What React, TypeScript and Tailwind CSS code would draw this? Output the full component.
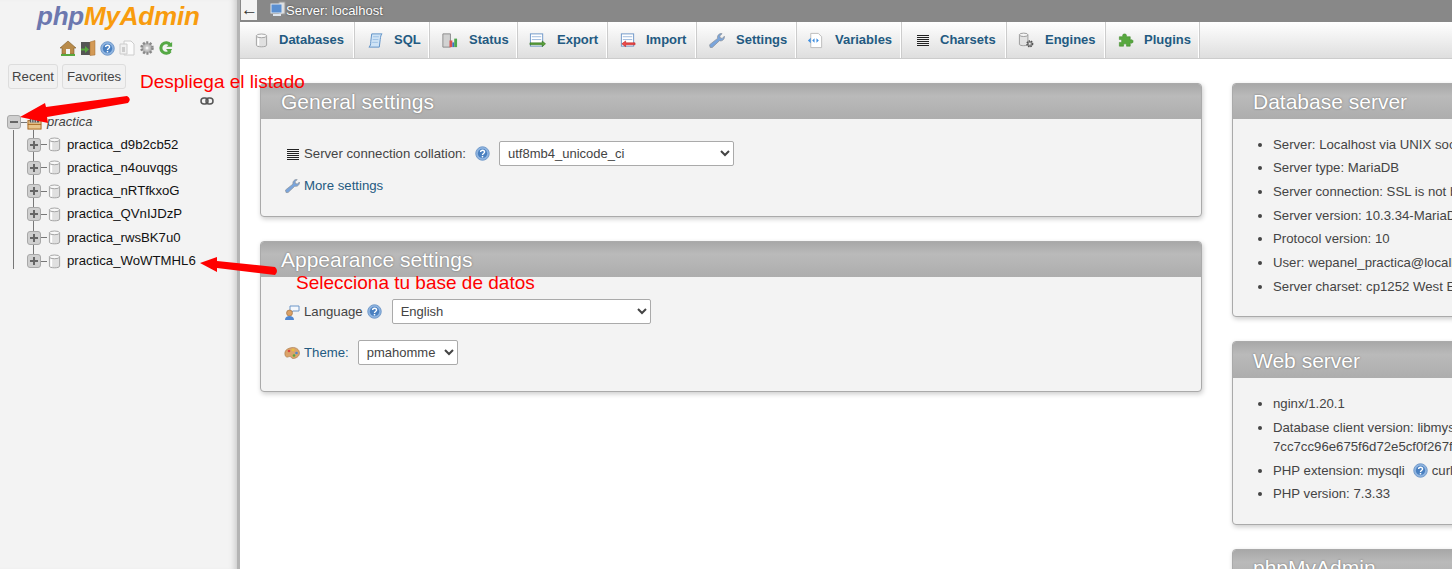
import { FC, ReactNode } from "react";

const Help: FC<{ className?: string }> = ({ className }) => (
  <svg viewBox="0 0 16 16" className={"w-[15px] h-[15px] shrink-0 " + (className ?? "")}>
    <circle cx="8" cy="8" r="7.2" fill="#8fb4e0" stroke="#6f97c8" />
    <circle cx="8" cy="8" r="5" fill="#4a80c0" />
    <path d="M6 6.400c0-2.600 4.200-2.600 4.200 0 0 1.600-2.200 1.600-2.200 3.200" fill="none" stroke="#fff" strokeWidth="1.500" />
    <rect x="7.200" y="10.600" width="1.600" height="1.600" fill="#fff" />
  </svg>
);

const Db: FC<{ className?: string }> = ({ className }) => (
  <svg viewBox="0 0 14 16" className={"w-[13px] h-[15px] shrink-0 " + (className ?? "")}>
    <path d="M1.500 3v10c0 2.400 11 2.400 11 0V3z" fill="#e0e0e0" stroke="#a0a0a0" />
    <ellipse cx="7" cy="3" rx="5.500" ry="2" fill="#f8f8f8" stroke="#a0a0a0" />
    <path d="M3.500 5.500v8" stroke="#fff" strokeWidth="2" />
  </svg>
);

const Lines: FC = () => (
  <svg viewBox="0 0 14 14" className="w-[14px] h-[14px] shrink-0">
    <path d="M1 2.500h12M1 4.500h12M1 6.500h12M1 8.500h12M1 10.500h12M1 12.500h12" stroke="#222" strokeWidth="1" />
  </svg>
);

const Wrench: FC<{ className?: string }> = ({ className }) => (
  <svg viewBox="0 0 16 16" className={"w-4 h-4 shrink-0 " + (className ?? "")}>
    <path d="M2 14.500 1.500 12 9 6c-.6-2.600 1.600-5 4.200-4.400L11 3.800l.6 1.800 1.800.4 2-2c.4 2.800-2 5-4.600 4.200L4 14.600z" fill="#7aa5dc" stroke="#8a9099" strokeWidth=".7" />
  </svg>
);

const Sql = () => (
  <svg viewBox="0 0 18 18" className="w-[17px] h-[17px]">
    <path d="M5 2h11c-1.500 1-1.500 3-2 6l-1 8H2c1.500-1 2-3 2-6z" fill="#cfe3f5" stroke="#5b8fc7" />
    <path d="M6.500 5h6M6 8h6M5.500 11h6" stroke="#9cc0e4" />
  </svg>
);

const Status = () => (
  <svg viewBox="0 0 18 18" className="w-[17px] h-[17px]">
    <path d="M2 2h8v14H2z" fill="#d2d2d2" stroke="#8a8a8a" />
    <path d="M9 9h3v7H9z" fill="#d9534f" />
    <path d="M12 11h2v5h-2z" fill="#3f6fc4" />
    <path d="M14 7h3v9h-3z" fill="#4fa64f" />
  </svg>
);

const Export = () => (
  <svg viewBox="0 0 18 18" className="w-[17px] h-[17px]">
    <rect x="1.500" y="2" width="13" height="13" fill="#fff" stroke="#6d96c8" />
    <path d="M3 5h10M3 8h10" stroke="#9bb9dc" />
    <path d="M1 11.500h13v-2l3.500 3-3.500 3v-2H1z" fill="#5aa33a" stroke="#2f6b1c" strokeWidth=".6" />
  </svg>
);

const Import = () => (
  <svg viewBox="0 0 18 18" className="w-[17px] h-[17px]">
    <rect x="2.500" y="2" width="13" height="13" fill="#fff" stroke="#6d96c8" />
    <path d="M4 5h10M4 8h10" stroke="#9bb9dc" />
    <path d="M17 11.500H7v-2l-4 3 4 3v-2h10z" fill="#ef4a4a" stroke="#b92020" strokeWidth=".6" />
  </svg>
);

const Variables = () => (
  <svg viewBox="0 0 18 18" className="w-[17px] h-[17px]">
    <path d="M4 1.500h8l3.500 3.500v11.500H4z" fill="#fff" stroke="#bbb" />
    <path d="M5.500 9l2.500-2.500v5zM12.500 9L10 6.500v5z" fill="#3f8fe0" />
    <path d="M1 9l3-3v6z" fill="#3f8fe0" />
  </svg>
);

const Engines = () => (
  <svg viewBox="0 0 18 18" className="w-[17px] h-[17px]">
    <path d="M1.500 3v10c0 2 9 2 9 0V3z" fill="#e2e2e2" stroke="#999" />
    <ellipse cx="6" cy="3" rx="4.500" ry="1.800" fill="#f5f5f5" stroke="#999" />
    <circle cx="12.500" cy="12.500" r="3" fill="#888" stroke="#555" strokeWidth="1.500" strokeDasharray="1.500 1" />
    <circle cx="12.500" cy="12.500" r="1" fill="#eee" />
  </svg>
);

const Plugins = () => (
  <svg viewBox="0 0 18 18" className="w-[17px] h-[17px]">
    <path d="M6 5V3.500c0-2 4-2 4 0V5h4v3.500c2-1 3 .2 3 1.500s-1 2.500-3 1.500V15h-4c.6-2-.4-2.500-1.500-2.500S6.500 13 7 15H2.500v-4c2 .6 2.500-.4 2.500-1.500S4.500 7.500 2.500 8V5z" fill="#58a83f" stroke="#3f8a2c" strokeWidth=".6" />
  </svg>
);

const tabs: { label: string; icon: ReactNode; width: string; gap: string; pad: string }[] = [
  { label: "Databases", icon: <Db />, width: "w-[114px]", gap: "ml-[9px]", pad: "pl-[13px]" },
  { label: "SQL", icon: <Sql />, width: "w-[75px]", gap: "ml-[10px]", pad: "pl-[13px]" },
  { label: "Status", icon: <Status />, width: "w-[88px]", gap: "ml-[11px]", pad: "pl-[12px]" },
  { label: "Export", icon: <Export />, width: "w-[90px]", gap: "ml-[11px]", pad: "pl-[12px]" },
  { label: "Import", icon: <Import />, width: "w-[89px]", gap: "ml-[10px]", pad: "pl-[12px]" },
  { label: "Settings", icon: <Wrench className="w-[17px] h-[17px]" />, width: "w-[100px]", gap: "ml-[11px]", pad: "pl-[12px]" },
  { label: "Variables", icon: <Variables />, width: "w-[105px]", gap: "ml-[11px]", pad: "pl-[11px]" },
  { label: "Charsets", icon: <Lines />, width: "w-[105px]", gap: "ml-[9px]", pad: "pl-[13px]" },
  { label: "Engines", icon: <Engines />, width: "w-[99px]", gap: "ml-[10px]", pad: "pl-[12px]" },
  { label: "Plugins", icon: <Plugins />, width: "w-[94px]", gap: "ml-[10px]", pad: "pl-[12px]" },
];

const databases = [
  "practica_d9b2cb52",
  "practica_n4ouvqgs",
  "practica_nRTfkxoG",
  "practica_QVnIJDzP",
  "practica_rwsBK7u0",
  "practica_WoWTMHL6",
];

const Expander: FC<{ minus?: boolean }> = ({ minus }) => (
  <span className="relative w-[14px] h-[14px] shrink-0 rounded-[3px] border border-[#a8a8a8] bg-[#cfcfcf] flex items-center justify-center">
    <span className="absolute w-[8px] h-[2px] bg-[#666]" />
    {!minus && <span className="absolute w-[2px] h-[8px] bg-[#666]" />}
  </span>
);

const Sidebar = () => (
  <aside className="w-[240px] shrink-0 h-full bg-[#f3f3f3] border-r-[3px] border-[#b4b4b4] shadow-[inset_-7px_0_6px_-5px_#c8c8c8] flex flex-col">
    <div className="h-[32px] pl-[37px] pt-[1px] text-[26px] leading-[30px] font-bold italic tracking-[-0.2px]">
      <span className="text-[#6c78af]">php</span>
      <span className="text-[#f89c0e]">MyAdmin</span>
    </div>
    <div className="mt-[7px] h-[18px] pl-[60px] flex items-center gap-[4px]">
      <svg viewBox="0 0 16 16" className="w-4 h-4">
        <path d="M0 8 8 1l8 7h-2v6H2V8z" fill="#b98b4a" stroke="#7d5c2c" strokeWidth=".6" />
        <path d="M6 14V9h4v5z" fill="#f4f4f4" />
        <path d="M1 15h14" stroke="#58a83f" strokeWidth="2" />
      </svg>
      <svg viewBox="0 0 16 16" className="w-4 h-4">
        <path d="M1 2h9v13H1z" fill="#555" />
        <path d="M10 2l5-1.500V15l-5 .5z" fill="#d49a56" stroke="#9c6a30" strokeWidth=".5" />
        <path d="M1 8.500h4V6l4 3.500-4 3.500v-2.500H1z" fill="#58a83f" />
      </svg>
      <Help className="w-[15px]" />
      <svg viewBox="0 0 16 16" className="w-4 h-4">
        <path d="M5 1h7l3 3v11H5z" fill="#fbfbfb" stroke="#ccc" />
        <path d="M1 4h7v10H1z" fill="#f0f0f0" stroke="#ccc" />
        <rect x="3" y="7" width="3" height="5" fill="#ccc" />
      </svg>
      <svg viewBox="0 0 16 16" className="w-4 h-4">
        <circle cx="8" cy="8" r="5.500" fill="#b5b5b5" stroke="#888" strokeWidth="2.500" strokeDasharray="2 1.500" />
        <circle cx="8" cy="8" r="3" fill="#c8c8c8" />
        <circle cx="8" cy="8" r="1.500" fill="#f3f3f3" />
      </svg>
      <svg viewBox="0 0 16 16" className="w-[14px] h-[14px]">
        <path d="M13 4.500A6 6 0 1 0 13 11.500" fill="none" stroke="#55a845" strokeWidth="3.500" />
        <path d="M8.500 6.500H15V1zM8 9l7 0-3 5z" fill="#55a845" />
      </svg>
    </div>
    <div className="mt-[7px] pl-[8px] flex gap-[4px]">
      <button className="h-[25px] w-[50px] rounded-[3px] border border-[#ddd] bg-[#f1f1f1] text-[13.200px] text-[#444]">Recent</button>
      <button className="h-[25px] w-[64px] rounded-[3px] border border-[#ddd] bg-[#f1f1f1] text-[13.200px] text-[#444]">Favorites</button>
    </div>
    <div className="mt-[7px] pr-[23px] h-[12px] flex justify-end">
      <svg viewBox="0 0 14 10" className="w-[14px] h-[10px]">
        <rect x="1" y="2" width="7" height="6" rx="3" fill="none" stroke="#555" strokeWidth="1.500" />
        <rect x="6" y="2" width="7" height="6" rx="3" fill="none" stroke="#555" strokeWidth="1.500" />
      </svg>
    </div>
    <div className="mt-[6px] pl-[7px] flex items-center h-[16px]">
      <Expander minus />
      <span className="w-[6px] h-px bg-[#777]" />
      <svg viewBox="0 0 16 16" className="w-[15px] h-[15px] shrink-0">
        <rect x="1" y="6" width="14" height="9" fill="#e8c48c" stroke="#a8641c" />
        <path d="M3 1.500h10V8H3z" fill="#555" />
        <path d="M5 2v6M7.500 2v6M10 2v6" stroke="#ddd" />
        <path d="M1 10h14" stroke="#a8641c" />
      </svg>
      <span className="ml-[5px] text-[13px] italic text-[#444]">practica</span>
    </div>
    <div className="ml-[13px] w-px bg-[#777] h-[139px] relative">
      <ul className="absolute left-[20px] top-0 h-[129px] w-[200px] border-l border-[#777]">
        {databases.map((name, i) => (
          <li key={name} className="absolute -left-[7px] h-[23px] flex items-center" style={{ top: 3 + i * 23.3 }}>
            <Expander />
            <span className="w-[6px] h-px bg-[#777]" />
            <Db className="ml-[1px]" />
            <span className="ml-[6px] text-[13.200px] text-[#111] whitespace-nowrap">{name}</span>
          </li>
        ))}
      </ul>
    </div>
  </aside>
);

const Panel: FC<{ title: string; className?: string; headerClass?: string; children: ReactNode }> = ({ title, className, headerClass, children }) => (
  <section className={"rounded-[4px] border border-[#aaa] bg-[#f3f3f3] shadow-[1px_2px_5px_#ccc] " + (className ?? "")}>
    <h2 className={"rounded-t-[3px] pl-[20px] text-[21px] text-white [text-shadow:0_0_2px_#666] bg-[linear-gradient(#a8a8a8,#bababa_35%,#adadad)] " + (headerClass ?? "h-[35px] leading-[36px]")}>
      {title}
    </h2>
    {children}
  </section>
);

const InfoList: FC<{ items: ReactNode[]; className: string }> = ({ items, className }) => (
  <ul className={"list-disc pl-[40px] text-[13.200px] leading-[19px] text-[#444] whitespace-nowrap " + className}>
    {items.map((item, i) => (
      <li key={i} className="mb-[4.700px]">{item}</li>
    ))}
  </ul>
);

const selectClass = "h-[25px] rounded-[2px] border border-[#aaa] bg-white px-[4px] text-[13px] text-[#444]";

export default function App() {
  return (
    <div className="relative flex h-[569px] w-[1452px] overflow-hidden bg-white font-['Liberation_Sans',Arial,sans-serif]">
      <Sidebar />
      <main className="flex-1 min-w-0 flex flex-col">
        <div className="h-[22px] bg-[#888] flex items-start">
          <span className="ml-[1px] w-[16px] h-[20px] bg-[#f3f3f3] text-[17px] leading-[20px] text-[#333] text-center">←</span>
          <svg viewBox="0 0 16 16" className="ml-[13px] mt-[1px] w-[16px] h-[16px]">
            <rect x="9" y="1" width="6" height="12" fill="#ddd" stroke="#999" />
            <rect x="1" y="3" width="11" height="9" fill="#5b8fd0" stroke="#dfe6ee" />
            <path d="M3 14h8" stroke="#dfe6ee" strokeWidth="2" />
          </svg>
          <span className="text-[13px] leading-[21px] text-white [text-shadow:0_0_2px_#333]">Server: localhost</span>
        </div>
        <nav className="h-[37px] flex border-b border-[#ccc] bg-[linear-gradient(#fff,#dedede)]">
          {tabs.map((t) => (
            <a key={t.label} className={"flex items-center h-full border-r border-white shadow-[1px_0_0_#ccc] " + t.width + " " + t.pad}>
              <span className="w-[17px] flex justify-center shrink-0">{t.icon}</span>
              <span className={"text-[13px] font-bold text-[#235a81] " + t.gap}>{t.label}</span>
            </a>
          ))}
        </nav>
        <div className="flex-1 min-h-0 flex pt-[24px] pl-[20px] overflow-hidden">
          <div className="w-[942px] shrink-0">
            <Panel title="General settings" className="h-[134px]">
              <div className="mt-[22px] pl-[25px] flex items-center h-[25px] text-[13.200px] text-[#444]">
                <Lines />
                <span className="ml-[4px]">Server connection collation:</span>
                <Help className="ml-[9px]" />
                <select className={selectClass + " ml-[9px] w-[235px]"} defaultValue="utf8mb4_unicode_ci">
                  <option>utf8mb4_unicode_ci</option>
                </select>
              </div>
              <a className="mt-[10px] pl-[23px] flex items-center text-[13.200px] text-[#235a81]">
                <Wrench />
                <span className="ml-[4px]">More settings</span>
              </a>
            </Panel>
            <Panel title="Appearance settings" className="h-[151px] mt-[24px]">
              <div className="mt-[22px] pl-[23px] flex items-center h-[25px] text-[13.200px] text-[#444]">
                <svg viewBox="0 0 16 16" className="w-4 h-4 shrink-0">
                  <path d="M6 2h9v5H9l-3 2z" fill="#f5f8fc" stroke="#6d96c8" />
                  <circle cx="5.500" cy="9" r="3" fill="#d9a066" stroke="#8a5a2c" strokeWidth=".5" />
                  <path d="M1 16c0-3 2-4 4.500-4S10 13 10 16z" fill="#4f86d0" />
                </svg>
                <span className="ml-[4px]">Language</span>
                <Help className="ml-[4px]" />
                <select className={selectClass + " ml-[10px] w-[259px]"} defaultValue="English">
                  <option>English</option>
                </select>
              </div>
              <div className="mt-[16px] pl-[23px] flex items-center h-[25px] text-[13.200px]">
                <svg viewBox="0 0 16 16" className="w-4 h-4 shrink-0">
                  <path d="M8 2.500c4-.5 7.500 2 7.500 5.500S12 13.500 9 13.500c-2 0-1.500-2-3-2s-2 1-3.500.5S.5 9 1 7c.5-2.500 3.500-4 7-4.500z" fill="#dba46a" stroke="#9a6a38" strokeWidth=".5" />
                  <circle cx="5" cy="6" r="1.300" fill="#d9473f" />
                  <circle cx="9" cy="5" r="1.300" fill="#e8c23a" />
                  <circle cx="12.500" cy="8" r="1.300" fill="#4f86d0" />
                  <circle cx="10" cy="10.500" r="1.300" fill="#58a83f" />
                </svg>
                <span className="ml-[4px] text-[#235a81]">Theme:</span>
                <select className={selectClass + " ml-[9px] w-[100px]"} defaultValue="pmahomme">
                  <option>pmahomme</option>
                </select>
              </div>
            </Panel>
          </div>
          <div className="ml-[30px] w-[500px] shrink-0">
            <Panel title="Database server" className="h-[234px]">
              <InfoList
                className="pt-[15.600px]"
                items={[
                  "Server: Localhost via UNIX socket",
                  "Server type: MariaDB",
                  "Server connection: SSL is not being used",
                  "Server version: 10.3.34-MariaDB",
                  "Protocol version: 10",
                  "User: wepanel_practica@localhost",
                  "Server charset: cp1252 West European (latin1)",
                ]}
              />
            </Panel>
            <Panel title="Web server" className="h-[184px] mt-[24px]" headerClass="h-[36px] leading-[38px]">
              <InfoList
                className="pt-[16.400px]"
                items={[
                  "nginx/1.20.1",
                  <>
                    Database client version: libmysql - mysqlnd 5.0.12-dev
                    <br />
                    7cc7cc96e675f6d72e5cf0f267f48e167c2abb23
                  </>,
                  <span className="flex items-center">
                    PHP extension: mysqli <Help className="ml-[8px] mr-[4px]" /> curl mbstring
                  </span>,
                  "PHP version: 7.3.33",
                ]}
              />
            </Panel>
            <Panel title="phpMyAdmin" className="h-[100px] mt-[24px]">
              <div />
            </Panel>
          </div>
        </div>
      </main>

      {/* anotaciones en rojo encima de la captura */}
      <span className="absolute left-[140px] top-[71px] text-[19px] leading-[21px] text-[#ff0000] whitespace-nowrap">Despliega el listado</span>
      <span className="absolute left-[296px] top-[272px] text-[19px] leading-[21px] text-[#ff0000] whitespace-nowrap">Selecciona tu base de datos</span>
      <svg viewBox="0 0 140 40" className="absolute left-0 top-[92px] w-[140px] h-[40px]">
        <path d="M20 25 45 11 46 15 127 4Q132 7 128 11L47 25 48 31z" fill="#ff0000" />
      </svg>
      <svg viewBox="0 0 90 24" className="absolute left-[195px] top-[253px] w-[90px] h-[24px]">
        <path d="M5 10 22 4 22 8 80 14Q84 18 80 22L22 15 22 19z" fill="#ff0000" />
      </svg>
    </div>
  );
}
